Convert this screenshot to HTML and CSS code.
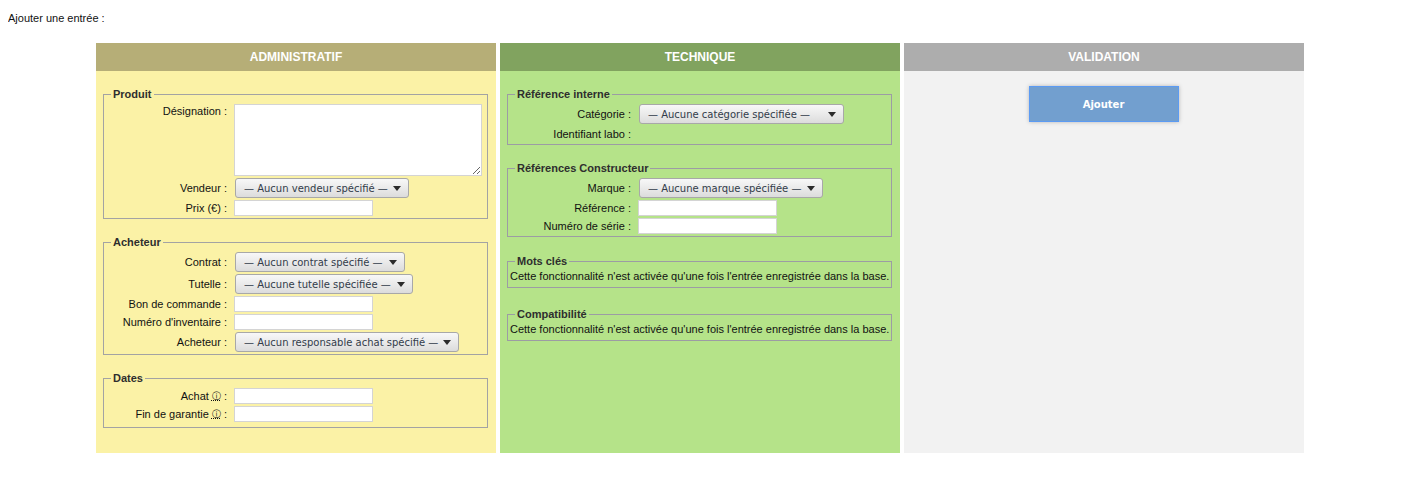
FILE: index.html
```html
<!DOCTYPE html>
<html lang="fr">
<head>
<meta charset="utf-8">
<title>Ajouter une entrée</title>
<link rel="stylesheet" href="styles.css">
</head>
<body>
<p class="intro">Ajouter une entrée :</p>
<div class="board">
  <section class="col col-admin">
    <h2 class="col-head">ADMINISTRATIF</h2>
    <div class="col-body">
      <fieldset class="group">
        <legend>Produit</legend>
        <div class="form">
          <label class="lbl lbl-top">Désignation :</label>
          <textarea class="area"></textarea>
          <label class="lbl">Vendeur :</label>
          <span class="sel"><select class="sel-vendeur"><option>— Aucun vendeur spécifié —</option></select></span>
          <label class="lbl">Prix (€) :</label>
          <input class="txt" type="text">
        </div>
      </fieldset>
      <fieldset class="group">
        <legend>Acheteur</legend>
        <div class="form">
          <label class="lbl">Contrat :</label>
          <span class="sel"><select class="sel-contrat"><option>— Aucun contrat spécifié —</option></select></span>
          <label class="lbl">Tutelle :</label>
          <span class="sel"><select class="sel-tutelle"><option>— Aucune tutelle spécifiée —</option></select></span>
          <label class="lbl">Bon de commande :</label>
          <input class="txt" type="text">
          <label class="lbl">Numéro d'inventaire :</label>
          <input class="txt" type="text">
          <label class="lbl">Acheteur :</label>
          <span class="sel"><select class="sel-acheteur"><option>— Aucun responsable achat spécifié —</option></select></span>
        </div>
      </fieldset>
      <fieldset class="group group-dates">
        <legend>Dates</legend>
        <div class="form">
          <label class="lbl">Achat <abbr class="info" title="Format : jj/mm/aaaa">ⓘ</abbr> :</label>
          <input class="txt" type="text">
          <label class="lbl">Fin de garantie <abbr class="info" title="Format : jj/mm/aaaa">ⓘ</abbr> :</label>
          <input class="txt" type="text">
        </div>
      </fieldset>
    </div>
  </section>
  <section class="col col-tech">
    <h2 class="col-head">TECHNIQUE</h2>
    <div class="col-body">
      <fieldset class="group">
        <legend>Référence interne</legend>
        <div class="form">
          <label class="lbl">Catégorie :</label>
          <span class="sel"><select class="sel-categorie"><option>— Aucune catégorie spécifiée —</option></select></span>
          <label class="lbl">Identifiant labo :</label>
          <span></span>
        </div>
      </fieldset>
      <fieldset class="group">
        <legend>Références Constructeur</legend>
        <div class="form">
          <label class="lbl">Marque :</label>
          <span class="sel"><select class="sel-marque"><option>— Aucune marque spécifiée —</option></select></span>
          <label class="lbl">Référence :</label>
          <input class="txt" type="text">
          <label class="lbl">Numéro de série :</label>
          <input class="txt" type="text">
        </div>
      </fieldset>
      <fieldset class="group group-note">
        <legend>Mots clés</legend>
        <p class="note">Cette fonctionnalité n'est activée qu'une fois l'entrée enregistrée dans la base.</p>
      </fieldset>
      <fieldset class="group group-note group-wide">
        <legend>Compatibilité</legend>
        <p class="note">Cette fonctionnalité n'est activée qu'une fois l'entrée enregistrée dans la base.</p>
      </fieldset>
    </div>
  </section>
  <section class="col col-valid">
    <h2 class="col-head">VALIDATION</h2>
    <div class="col-body col-body-center">
      <button class="btn" type="button">Ajouter</button>
    </div>
  </section>
</div>
</body>
</html>
```

FILE: styles.css
```css
body {
  margin: 8px;
  background: #ffffff;
  font-family: "Liberation Sans", Arial, sans-serif;
  font-size: 11px;
  color: #111111;
}

.intro {
  margin: 4px 0 0;
  line-height: 13px;
}

.board {
  display: flex;
  gap: 4px;
  margin: 18px 0 0 88px;
}

.col {
  width: 400px;
  display: flex;
  flex-direction: column;
}

.col-head {
  margin: 0;
  height: 28px;
  line-height: 28px;
  text-align: center;
  font-size: 12px;
  font-weight: bold;
  color: #ffffff;
}

.col-body {
  flex: 1;
  padding: 0 8px 25px 7px;
}

.col-admin .col-head { background: #b6ae77; }
.col-admin .col-body { background: #fbf2a6; }
.col-tech .col-head { background: #81a35f; }
.col-tech .col-body { background: #b5e389; }
.col-valid .col-head { background: #adadad; }
.col-valid .col-body { background: #f2f2f2; }

.group {
  margin: 17px 0 0;
  padding: 2px 2px 1px;
  border: 1px solid #a3a3a3;
  min-width: 0;
}

.col-tech .group { border-color: #9c9ca4; }

.group legend {
  margin-left: 5px;
  padding: 0 2px;
  font-weight: bold;
  color: #2e2e2e;
  line-height: 13px;
}

.group-dates { padding-bottom: 4px; }

.form {
  display: grid;
  grid-template-columns: 121px 1fr;
  grid-auto-rows: minmax(18px, auto);
  column-gap: 7px;
  align-items: center;
}

.lbl {
  text-align: right;
  line-height: 13px;
  white-space: nowrap;
}

.lbl-top {
  align-self: start;
  padding-top: 2px;
}

.info {
  font-family: "DejaVu Sans", sans-serif;
  font-size: 9px;
  line-height: 9px;
  text-decoration: underline dotted;
  vertical-align: 1px;
  cursor: help;
}

.area {
  width: 248px;
  height: 72px;
  margin: 1px 0;
  box-sizing: border-box;
  border: 1px solid #d4d4d4;
  background: #ffffff;
  padding: 2px;
  font-family: "Liberation Sans", Arial, sans-serif;
  font-size: 11px;
}

.txt {
  width: 139px;
  height: 16px;
  margin: 1px 0;
  box-sizing: border-box;
  border: 1px solid #d4d4d4;
  background: #ffffff;
  padding: 0 2px;
  font-family: "Liberation Sans", Arial, sans-serif;
  font-size: 11px;
}

.sel {
  position: relative;
  display: inline-block;
  justify-self: start;
  margin: 1px 0 1px 1px;
  height: 20px;
}

.sel select {
  -webkit-appearance: none;
  appearance: none;
  display: block;
  height: 20px;
  box-sizing: border-box;
  border: 1px solid #a8a8a8;
  border-radius: 3px;
  background: linear-gradient(#f8f8f8, #dcdcdc);
  padding: 0 0 0 8px;
  font-family: "DejaVu Sans", sans-serif;
  font-size: 10px;
  color: #323c4a;
  outline: none;
}

.sel::after {
  content: "";
  position: absolute;
  right: 8px;
  top: 8px;
  border-left: 4px solid transparent;
  border-right: 4px solid transparent;
  border-top: 5px solid #2b2b2b;
  pointer-events: none;
}

.sel-vendeur { width: 174px; }
.sel-contrat { width: 170px; }
.sel-tutelle { width: 178px; }
.sel-acheteur { width: 224px; }
.sel-categorie { width: 205px; }
.sel-marque { width: 184px; }

.group-note { margin-top: 18px; padding: 2px 2px 4px; }
.group-wide { margin-top: 20px; }

.note {
  margin: 0;
  line-height: 13px;
  white-space: nowrap;
}

.col-body-center {
  display: flex;
  justify-content: center;
  align-items: flex-start;
  padding-top: 15px;
}

.btn {
  width: 150px;
  height: 36px;
  border: 1px solid #5c9bf3;
  background: #729fcf;
  color: #ffffff;
  font-family: "DejaVu Sans", sans-serif;
  font-weight: bold;
  font-size: 10px;
  box-shadow: 0 0 4px rgba(0, 0, 0, 0.25);
  cursor: pointer;
}
```
